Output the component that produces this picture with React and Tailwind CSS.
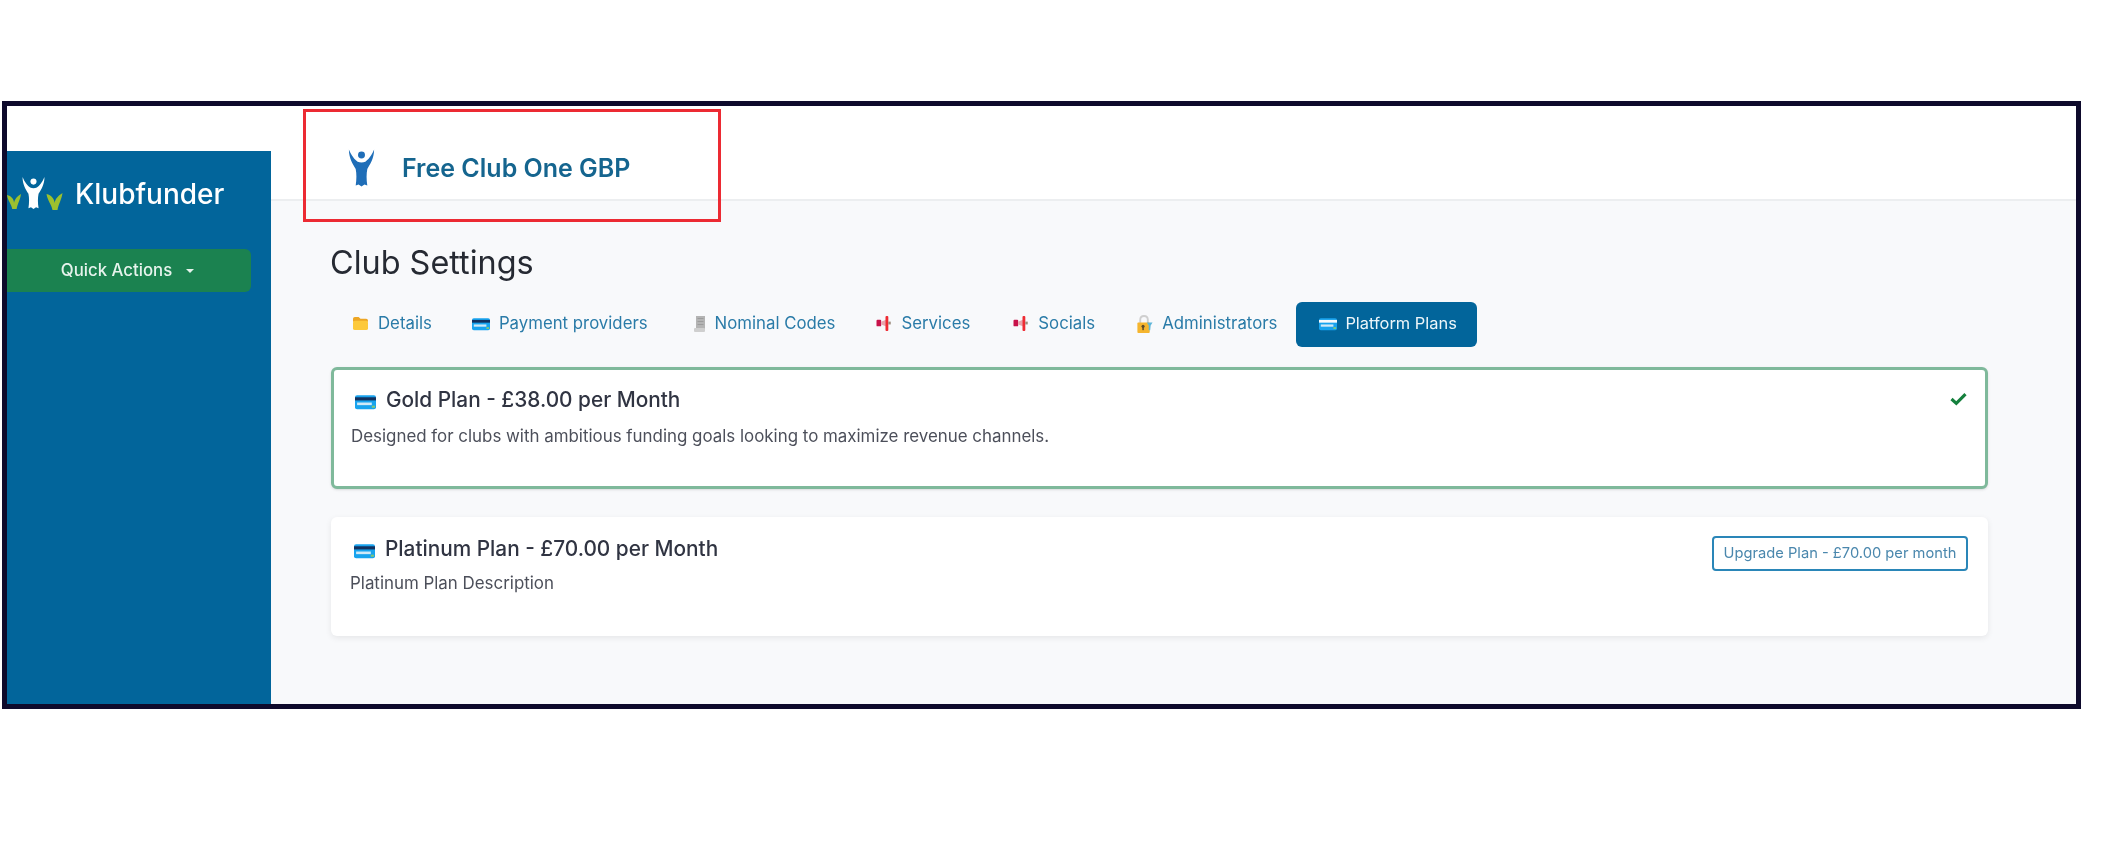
const sans = "font-['Inter',sans-serif]";

function Figure({ className }) {
  return (
    <svg viewBox="0 0 32 38" className={className} fill="currentColor">
      <circle cx="16" cy="5.5" r="3.6" />
      <path d="M3 0 C6 7 9 10.5 12 12.5 C14.5 13.5 17.5 13.5 20 12.5 C23 10.5 26 7 29 0 C29 9 25 15 22 20 C21 25 21 31 22 37 L19 36 L16 38 L13 36 L10 37 C11 31 11 25 10 20 C7 15 3 9 3 0 Z" />
    </svg>
  );
}

function Sprout({ className }) {
  return (
    <svg viewBox="0 0 16 18" className={className} fill="#9cc02e">
      <path d="M0 2 C5 3 8 7 8 11 C9 7 11 4 16 1 C15 8 12 12 11 18 L6 18 C5 12 1 9 0 2 Z" />
    </svg>
  );
}

function Folder() {
  return (
    <svg viewBox="0 0 18 16" className="w-[17px] h-[15px]">
      <path d="M1 3 Q1 1 3 1 L7 1 L9 3 L15 3 Q17 3 17 5 L17 6 L1 6 Z" fill="#eda624" />
      <rect x="1" y="5" width="16" height="10" rx="2" fill="#fdc93a" />
    </svg>
  );
}

function Card({ className = "w-[18px] h-[14px]", light }) {
  return (
    <svg viewBox="0 0 20 15" className={className}>
      <rect x="0" y="1" width="20" height="13.5" rx="2" fill="#18a3ee" />
      <rect x="0" y="3" width="20" height="3" fill={light ? "#f8fafc" : "#12315f"} />
      <rect x="2" y="8" width="14" height="2.5" fill="#cfe9f7" />
      <rect x="16" y="11" width="3" height="2" fill="#7fc97a" />
    </svg>
  );
}

function Scroll() {
  return (
    <svg viewBox="0 0 12 16" className="w-[12px] h-[16px]">
      <rect x="2" y="0" width="9" height="13" fill="#b4b4b4" />
      <rect x="3.5" y="2" width="6" height="1" fill="#9c9c9c" />
      <rect x="3.5" y="5" width="6" height="1" fill="#9c9c9c" />
      <rect x="3.5" y="8" width="6" height="1" fill="#9c9c9c" />
      <rect x="0" y="12" width="11" height="4" rx="1" fill="#cfcfcf" />
    </svg>
  );
}

function Horn() {
  return (
    <svg viewBox="0 0 16 16" className="w-[16px] h-[15px]">
      <rect x="0" y="4" width="5" height="7" rx="1" fill="#c8124a" />
      <path d="M5 6 L10 4 L10 11 L5 9 Z" fill="#e8a4ac" />
      <rect x="9.6" y="0" width="3" height="16" rx="1" fill="#ee2b33" />
      <rect x="12.6" y="6" width="2.6" height="3" fill="#9a8a7c" />
    </svg>
  );
}

function Lock() {
  return (
    <svg viewBox="0 0 17 19" className="w-[17px] h-[18px]">
      <path d="M4 9 L4 5 Q4 1 8 1 Q12 1 12 5 L12 9" fill="none" stroke="#cfcfcf" strokeWidth="2" />
      <rect x="1" y="8" width="13" height="11" rx="1" fill="#f5b52e" />
      <circle cx="7" cy="12" r="1.6" fill="#5c4a2a" />
      <rect x="6.2" y="12" width="1.6" height="4" fill="#5c4a2a" />
      <path d="M11 8 L17 8 L15 11 L14.5 16 L13 16 L13 11 Z" fill="#5fb6d9" />
    </svg>
  );
}

function Tab({ icon, label, active, className = "" }) {
  return (
    <div className={`flex items-center h-[45px] rounded-[6px] ${className} ${active ? "bg-[#02659b] text-[16.4px] text-[#eef6fa] pl-[23px] pb-[2px] mt-[1px] -mb-[1px] gap-[8px] w-[181px]" : "text-[16.8px] text-[#2a7ba8] gap-[9px]"}`}>
      {icon}
      <span className="whitespace-nowrap">{label}</span>
    </div>
  );
}

function PlanCard({ title, desc, selected, right }) {
  return (
    <div className={`relative flex justify-between bg-white rounded-[6px] ${selected ? "h-[122px] border-[3px] border-[#7fb99b] pl-[17px] pr-[18px] pt-[16px] shadow-sm" : "h-[119px] pl-[19px] pr-[20px] pt-[18px] shadow-[0_2px_6px_rgba(0,0,0,0.08)]"}`}>
      <div>
        <div className="flex items-center gap-[10px] text-[20.8px] leading-[28px] font-medium text-[#303442]">
          <Card className="w-[21px] h-[16px] mt-[3px] ml-[4px]" />
          <span>{title}</span>
        </div>
        <p className={`${selected ? "mt-[11px]" : "mt-[9px]"} text-[16.9px] leading-[22px] text-[#4c4f5a] whitespace-nowrap`}>{desc}</p>
      </div>
      {right}
    </div>
  );
}

export default function App() {
  return (
    <div className={`h-[842px] w-[2101px] bg-white pt-[101px] pl-[2px] ${sans}`}>
      <div className="relative flex h-[608px] w-[2079px] border-[5px] border-[#0e0a2c] bg-white">
        <aside className="mt-[45px] w-[264px] shrink-0 bg-[#02659b] blur-[0.6px]">
          <div className="flex items-center h-[85px] mb-[13px]">
            <div className="flex items-end w-[68px] h-[33px]">
              <Sprout className="w-[14px] h-[18px]" />
              <Figure className="w-[27px] h-[34px] text-white -ml-[1px]" />
              <Sprout className="w-[17px] h-[18px] -ml-[1px]" />
            </div>
            <span className="text-[28px] font-medium text-white leading-none">Klubfunder</span>
          </div>
          <button className="flex items-center justify-center gap-[14px] w-[244px] h-[43px] pr-[3px] rounded-r-[6px] bg-[#1b8250] text-[16.8px] font-medium text-[#e6f3ec]">
            Quick Actions
            <span className="border-x-[4px] border-t-[4px] border-x-transparent border-t-[#e6f3ec]" />
          </button>
        </aside>

        <main className="flex flex-1 flex-col bg-[#f8f9fb] blur-[0.6px]">
          <header className="flex items-center h-[95px] bg-white border-b-2 border-[#eceef0] pl-[75px] pt-[32px] gap-[25px]">
            <Figure className="w-[31px] h-[38px] -mt-[1px] text-[#1f6eb8]" />
            <span className="text-[25px] font-semibold text-[#15658f]">Free Club One GBP</span>
          </header>
          <div className="pl-[60px] pr-[88px] pt-[43px]">
            <h1 className="-ml-[1px] text-[32.4px] leading-[38px] font-normal text-[#262a33]">Club Settings</h1>
            <nav className="flex items-center mt-[19px] pl-[21px] gap-[41px]">
              <Tab icon={<Folder />} label="Details" />
              <Tab icon={<Card />} label="Payment providers" className="-ml-[1px]" />
              <Tab icon={<Scroll />} label="Nominal Codes" className="ml-[5px]" />
              <Tab icon={<Horn />} label="Services" />
              <Tab icon={<Horn />} label="Socials" className="ml-[2px]" />
              <Tab icon={<Lock />} label="Administrators" />
              <Tab icon={<Card light />} label="Platform Plans" active className="-ml-[22px]" />
            </nav>
            <div className="mt-[21px] flex flex-col gap-[28px]">
              <PlanCard
                selected
                title="Gold Plan - £38.00 per Month"
                desc="Designed for clubs with ambitious funding goals looking to maximize revenue channels."
                right={
                  <svg viewBox="0 0 20 16" className="w-[19px] h-[14px] mt-[6px] -mr-[1px]" fill="none" stroke="#15803d" strokeWidth="3.6">
                    <path d="M2 8 L7.5 13 L18 2.5" />
                  </svg>
                }
              />
              <PlanCard
                title="Platinum Plan - £70.00 per Month"
                desc="Platinum Plan Description"
                right={
                  <button className="h-[35px] w-[256px] mt-[1px] rounded-[4px] border-2 border-[#2a86b8] text-[14.7px] text-[#4a87ad] whitespace-nowrap">
                    Upgrade Plan - £70.00 per month
                  </button>
                }
              />
            </div>
          </div>
        </main>

        <div className="absolute left-[296px] top-[3px] h-[113px] w-[418px] border-[3px] border-[#ec2a33]" />
      </div>
    </div>
  );
}
